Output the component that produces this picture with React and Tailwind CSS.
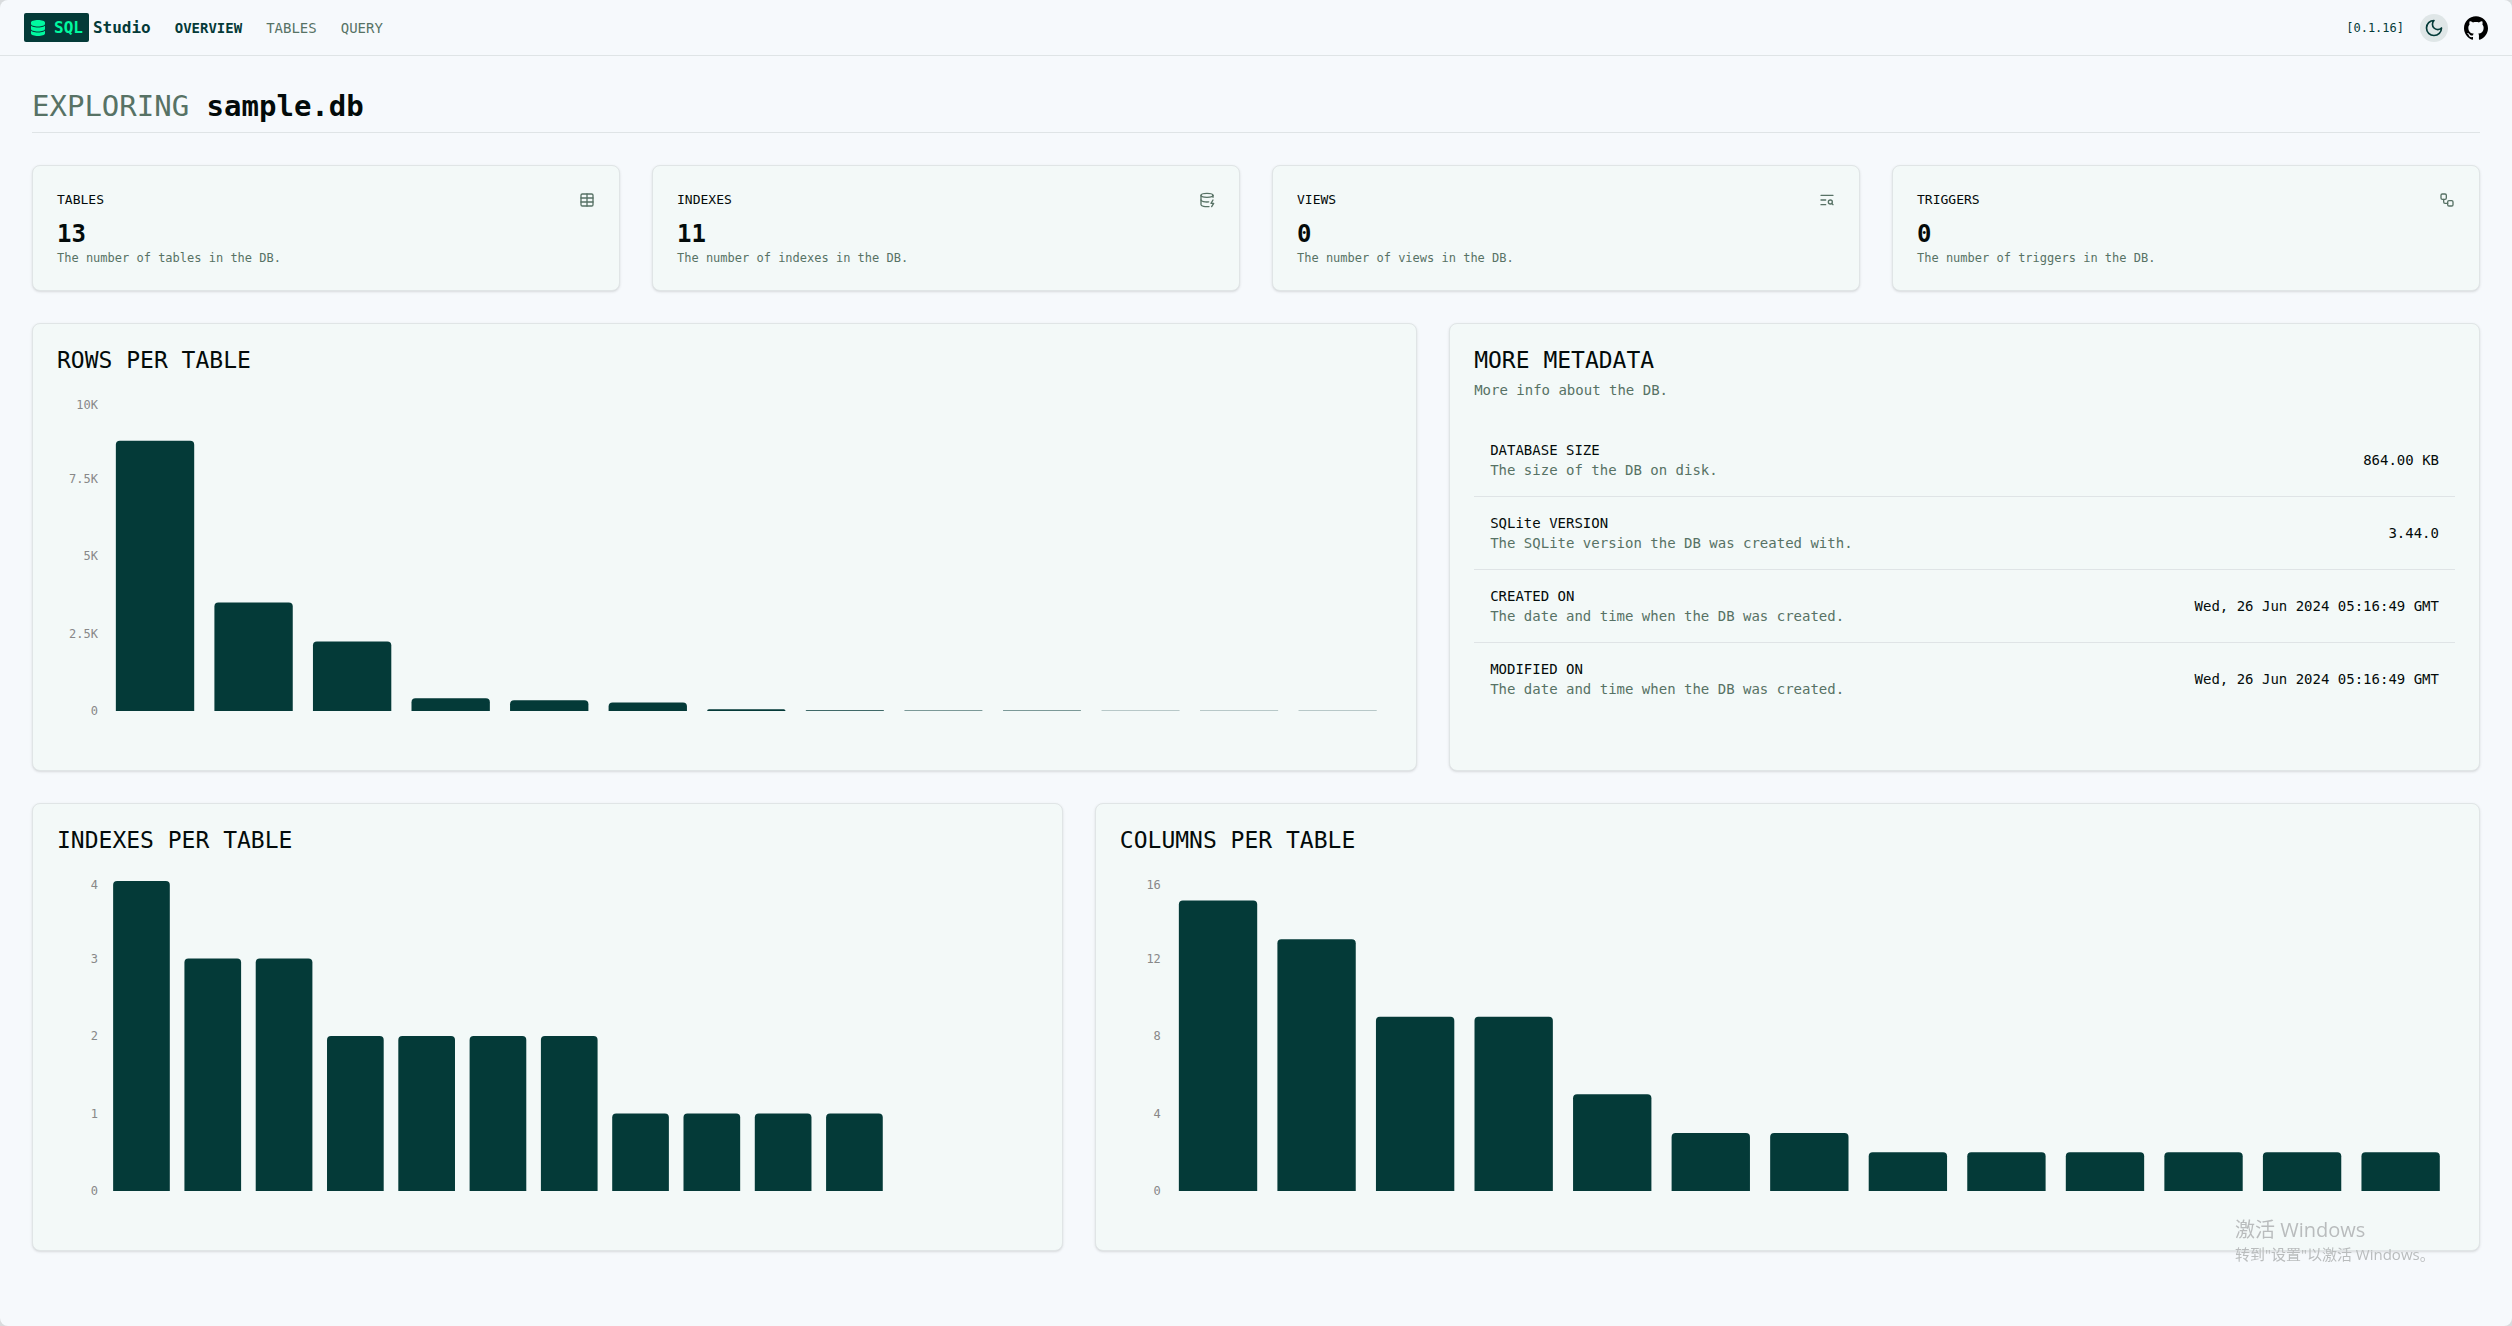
import React from "react";
import { Table, DatabaseZap, TextSearch, Workflow } from "lucide-react";
import { FaDatabase } from "react-icons/fa6";
import { SiGithub } from "react-icons/si";

const stats = [
  { title: "TABLES", value: "13", note: "The number of tables in the DB.", Icon: Table },
  { title: "INDEXES", value: "11", note: "The number of indexes in the DB.", Icon: DatabaseZap },
  { title: "VIEWS", value: "0", note: "The number of views in the DB.", Icon: TextSearch },
  { title: "TRIGGERS", value: "0", note: "The number of triggers in the DB.", Icon: Workflow },
];

const metadata = [
  { name: "DATABASE SIZE", note: "The size of the DB on disk.", value: "864.00 KB" },
  { name: "SQLite VERSION", note: "The SQLite version the DB was created with.", value: "3.44.0" },
  { name: "CREATED ON", note: "The date and time when the DB was created.", value: "Wed, 26 Jun 2024 05:16:49 GMT" },
  { name: "MODIFIED ON", note: "The date and time when the DB was created.", value: "Wed, 26 Jun 2024 05:16:49 GMT" },
];

const rowsPerTable = [8715, 3503, 2240, 412, 347, 275, 59, 25, 18, 15, 10, 8, 5];
const indexesPerTable = [4, 3, 3, 2, 2, 2, 2, 1, 1, 1, 1, 0, 0];
const columnsPerTable = [15, 13, 9, 9, 5, 3, 3, 2, 2, 2, 2, 2, 2];

const PLOT_HEIGHT = 310;

function Card({ className = "", children }) {
  return (
    <section className={"rounded-lg border border-[#e0e5e6] bg-[#f3f9f8] shadow-sm " + className}>
      {children}
    </section>
  );
}

function StatCard({ title, value, note, Icon }) {
  return (
    <Card className="p-6">
      <div className="flex h-5 items-center justify-between">
        <h2 className="text-[13px] leading-5 font-medium">{title}</h2>
        <Icon className="size-4 text-[#577265]" aria-hidden="true" />
      </div>
      <p className="mt-2 text-2xl leading-8 font-semibold">{value}</p>
      <p className="text-xs leading-4 text-[#577265]">{note}</p>
    </Card>
  );
}

function BarChart({ title, values, max, ticks, className }) {
  const slot = 100 / values.length;
  return (
    <Card className={"pt-6 pr-6 pb-6 pl-2 " + className}>
      <h2 className="pl-4 text-[23px] leading-6 font-medium">{title}</h2>
      <div className="mt-6 flex h-[350px] pt-[5px] pr-[5px] pl-[5px]">
        <ul className="-mt-2 flex h-[326px] w-[60px] shrink-0 flex-col justify-between pr-2 text-right text-xs leading-4 text-[#888888]">
          {ticks.map((t) => (
            <li key={t} className="first:mt-1 first:-mb-1">{t}</li>
          ))}
        </ul>
        <svg className="h-[310px] min-w-0 flex-1" role="img" aria-label={title} width="100%" height={PLOT_HEIGHT}>
          {values.map((v, i) => {
            const h = (v / max) * PLOT_HEIGHT;
            return v > 0 ? (
              <rect
                key={i}
                x={i * slot + slot * 0.1 + "%"}
                y={PLOT_HEIGHT - h}
                width={slot * 0.795 + "%"}
                height={h + 8}
                rx={Math.min(4, h)}
                fill="#043a38"
              />
            ) : null;
          })}
        </svg>
      </div>
    </Card>
  );
}

export default function App() {
  return (
    <div className="bg-[#d9dcde] font-['DejaVu_Sans_Mono','Noto_Sans_CJK_SC',monospace] text-[#030b0a]">
      <div className="min-h-screen rounded-lg bg-[#f6f9fc]">
        <header className="flex h-14 items-center justify-between border-b border-[#dfe4e6] px-6">
          <div className="flex items-center gap-6">
            <a href="#home" className="flex items-center gap-1 text-base font-bold text-[#043a38]">
              <span className="flex h-[29px] items-center gap-2 rounded-xs bg-[#043a38] px-1.5 text-[#00f9a0]">
                <FaDatabase className="size-4" aria-hidden="true" />
                SQL
              </span>
              Studio
            </a>
            <nav className="flex items-center gap-6 text-sm">
              <a href="#overview" className="font-bold text-[#043a38]">OVERVIEW</a>
              <a href="#tables" className="text-[#577265]">TABLES</a>
              <a href="#query" className="text-[#577265]">QUERY</a>
            </nav>
          </div>
          <div className="flex items-center gap-4">
            <span className="text-xs text-[#043a38]">[0.1.16]</span>
            <button type="button" aria-label="Toggle theme" className="flex size-7 items-center justify-center rounded-full bg-[#dfe6e7] text-[#043a38]">
              <svg className="size-5" viewBox="0 0 24 24" fill="none" stroke="currentColor" strokeWidth="2" strokeLinecap="round" strokeLinejoin="round" aria-hidden="true">
                <path d="M12 3a6 6 0 0 0 9 9 9 9 0 1 1-9-9Z" />
              </svg>
            </button>
            <a href="#github" aria-label="GitHub">
              <SiGithub className="size-6 text-black" aria-hidden="true" />
            </a>
          </div>
        </header>

        <main className="flex flex-col gap-8 px-8 pt-8 pb-8">
          <h1 className="border-b border-[#dfe4e6] pb-2 text-[29px] leading-9 font-bold">
            <span className="font-normal text-[#577265]">EXPLORING</span> sample.db
          </h1>

          <div className="grid grid-cols-4 gap-8">
            {stats.map((s) => (
              <StatCard key={s.title} {...s} />
            ))}
          </div>

          <div className="grid grid-cols-7 gap-8">
            <BarChart className="col-span-4" title="ROWS PER TABLE" values={rowsPerTable} max={10000} ticks={["10K", "7.5K", "5K", "2.5K", "0"]} />
            <Card className="col-span-3 p-6">
              <h2 className="text-[23px] leading-6 font-medium">MORE METADATA</h2>
              <p className="mt-2 text-sm text-[#577265]">More info about the DB.</p>
              <table className="mt-6 w-full text-sm">
                <tbody className="divide-y divide-[#dfe4e6]">
                  {metadata.map((m) => (
                    <tr key={m.name}>
                      <th scope="row" className="p-4 text-left font-medium">
                        {m.name}
                        <p className="font-normal text-[#577265]">{m.note}</p>
                      </th>
                      <td className="p-4 text-right">{m.value}</td>
                    </tr>
                  ))}
                </tbody>
              </table>
            </Card>
          </div>

          <div className="grid grid-cols-7 gap-8">
            <BarChart className="col-span-3" title="INDEXES PER TABLE" values={indexesPerTable} max={4} ticks={["4", "3", "2", "1", "0"]} />
            <BarChart className="col-span-4" title="COLUMNS PER TABLE" values={columnsPerTable} max={16} ticks={["16", "12", "8", "4", "0"]} />
          </div>
        </main>
      </div>

      <div className="pointer-events-none fixed right-20 bottom-15 w-[197px] font-['Open_Sans','Noto_Sans_CJK_SC',sans-serif] whitespace-nowrap text-[#b9bcbd]">
        <p className="text-xl leading-6">激活 Windows</p>
        <p className="text-[15px] leading-6">转到"设置"以激活 Windows。</p>
      </div>
    </div>
  );
}
